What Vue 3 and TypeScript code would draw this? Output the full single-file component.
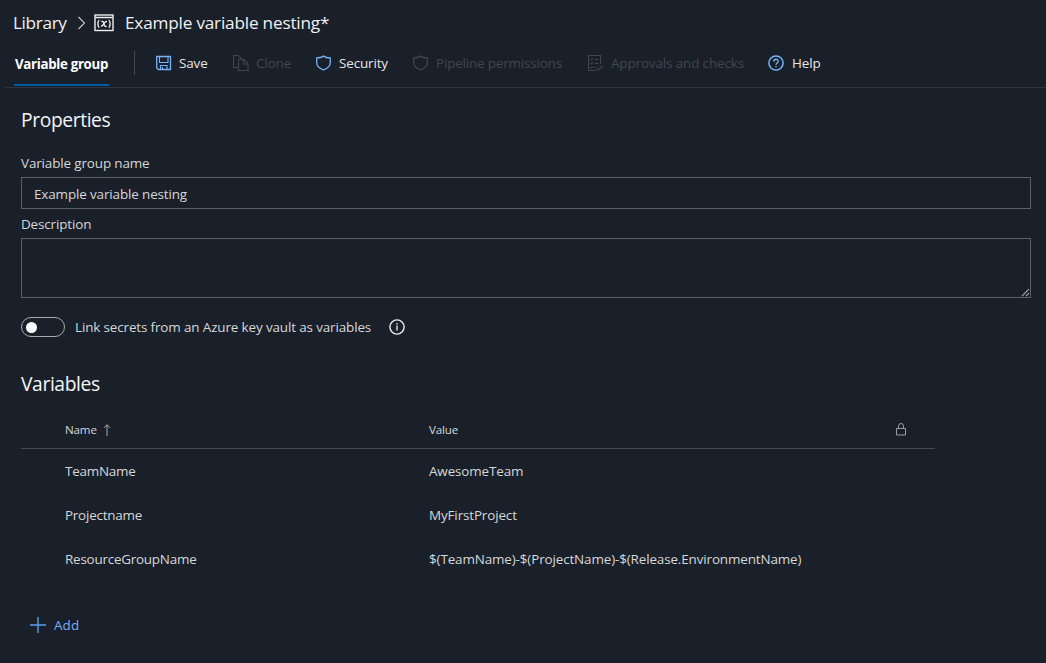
<script setup lang="ts">
import { ref } from 'vue'

interface Action {
  id: string
  label: string
  disabled: boolean
}

interface Variable {
  name: string
  value: string
}

const groupName = ref('Example variable nesting')
const description = ref('')
const linkSecrets = ref(false)

const actions: Action[] = [
  { id: 'save', label: 'Save', disabled: false },
  { id: 'clone', label: 'Clone', disabled: true },
  { id: 'security', label: 'Security', disabled: false },
  { id: 'permissions', label: 'Pipeline permissions', disabled: true },
  { id: 'approvals', label: 'Approvals and checks', disabled: true },
  { id: 'help', label: 'Help', disabled: false },
]

const variables = ref<Variable[]>([
  { name: 'TeamName', value: 'AwesomeTeam' },
  { name: 'Projectname', value: 'MyFirstProject' },
  { name: 'ResourceGroupName', value: '$(TeamName)-$(ProjectName)-$(Release.EnvironmentName)' },
])
</script>

<template>
  <div class="page">
    <header class="crumbs">
      <span class="crumb-root">Library</span>
      <svg class="chevron" width="9" height="14" viewBox="0 0 9 14"><path d="M1.500 1l6 6-6 6" fill="none" stroke="#c4c6c9" stroke-width="1.100" /></svg>
      <svg class="group-icon" width="20" height="18" viewBox="0 0 20 18">
        <rect x="1" y="1" width="18" height="15.500" fill="none" stroke="#eee" stroke-width="1.400" />
        <path d="M1 3.500h18" stroke="#eee" stroke-width="1.500" />
        <path d="M5 6q-2.200 3.700 0 7.800M15 6q2.200 3.700 0 7.800" fill="none" stroke="#eee" stroke-width="1.300" />
        <path d="M7.300 7.500q1.600-.6 2.200 1l1 3q.6 1.500 2.200.7M13 7.500q-1.500-.3-2.700 1.700l-1 1.500q-1 1.700-2.400 1.300" fill="none" stroke="#eee" stroke-width="1.400" />
      </svg>
      <span class="crumb-title">Example variable nesting*</span>
    </header>

    <nav class="toolbar">
      <div class="tab">Variable group</div>
      <div class="divider"></div>
      <div v-for="action in actions" :key="action.id" class="action" :class="[action.id, { disabled: action.disabled }]">
        <svg class="icon" width="16" height="16" viewBox="0 0 16 16" fill="none" stroke="currentColor" stroke-width="1.100">
          <template v-if="action.id === 'save'">
            <path d="M.7 1.500h13.800v13H2.500L.7 13z" stroke-width="1.300" />
            <path d="M3.500 1.500v6h8.500v-6M4.500 14.500v-4h6.500v4M6.500 12v2.500" />
          </template>
          <template v-else-if="action.id === 'clone'">
            <path d="M5.500 12.500h-5v-12h5l3 3v1M5.500 4.500h5.500l4 4v7H5.500zM10.500 4.500v4.500h4.500" />
          </template>
          <path v-else-if="action.id === 'security' || action.id === 'permissions'" d="M7.500 1.100C5.800 2.300 3.100 2.900.7 3v4.500C.7 11 3.800 13.500 7.500 15c3.700-1.500 6.800-4 6.800-7.500V3C11.900 2.900 9.200 2.300 7.500 1.100z" stroke-width="1.300" />
          <template v-else-if="action.id === 'approvals'">
            <path d="M12.500 9V.5H.5v15H8M2.500 4l1 1 1.300-1.700M2.500 8l1 1 1.300-1.700M2.500 12l1 1 1.300-1.700M6.500 4.500h4M6.500 8.500h4M6.500 12.500h1.500M8.700 13l2 2 3.800-4" />
          </template>
          <template v-else>
            <circle cx="8" cy="8" r="7.100" stroke-width="1.500" />
            <path d="M5.800 6.500C5.800 3.500 10.200 3.500 10.200 6.300 10.200 7.900 8 8 8 9.800M8 10.900v1.400" stroke-width="1.400" />
          </template>
        </svg>
        <span class="label">{{ action.label }}</span>
      </div>
    </nav>

    <main class="content">
      <h2 class="properties-title">Properties</h2>
      <label class="field-label name-label" for="group-name">Variable group name</label>
      <input id="group-name" v-model="groupName" class="name-input" type="text" />
      <label class="field-label desc-label" for="group-desc">Description</label>
      <div class="desc-box">
        <textarea id="group-desc" v-model="description" class="desc-input"></textarea>
        <svg class="grip" width="9" height="9" viewBox="0 0 9 9"><path d="M1 8L8 1M5 8l3-3" stroke="#d8dadd" stroke-width="1.100" stroke-dasharray="1 .4" /></svg>
      </div>

      <div class="link-row">
        <button class="toggle" type="button" role="switch" :aria-checked="linkSecrets" @click="linkSecrets = !linkSecrets"><span class="knob"></span></button>
        <span class="link-label">Link secrets from an Azure key vault as variables</span>
        <svg width="16" height="16" viewBox="0 0 16 16"><circle cx="8" cy="8" r="7.100" fill="none" stroke="#eee" stroke-width="1.400" /><path d="M8 6.500v5M8 4v1.400" stroke="#eee" stroke-width="1.300" /></svg>
      </div>

      <h2 class="variables-title">Variables</h2>
      <div class="table">
        <div class="row head">
          <div class="cell sort">
            <span class="col-name">Name</span>
            <svg width="8" height="12" viewBox="0 0 8 12"><path d="M4 12V.8M1 3.800l3-3 3 3" fill="none" stroke="#a9abad" stroke-width="1" /></svg>
          </div>
          <div class="cell"><span class="col-value">Value</span></div>
          <div class="cell lock">
            <svg width="10" height="13" viewBox="0 0 10 13"><path d="M.5 5.500h9v6.500h-9zM2.500 5.500v-2.500a2.500 2.500 0 0 1 5 0v2.500" fill="none" stroke="#9a9da0" stroke-width="1" /></svg>
          </div>
        </div>
        <div v-for="variable in variables" :key="variable.name" class="row">
          <div class="cell name"><span>{{ variable.name }}</span></div>
          <div class="cell"><span>{{ variable.value }}</span></div>
        </div>
      </div>

      <div class="add">
        <svg width="16" height="16" viewBox="0 0 16 16"><path d="M8 0v16M0 8h16" stroke="#5b9df0" stroke-width="1.400" /></svg>
        <span class="add-label">Add</span>
      </div>
    </main>
  </div>
</template>

<style>
body {
  background: #1a2029;
}
</style>

<style scoped>
.page {
  box-sizing: border-box;
  height: 663px;
  overflow: hidden;
  background: #1a2029;
  color: #d6d7d9;
  font-family: "Open Sans", "Noto Sans", sans-serif;
  font-size: 13.45px;
  letter-spacing: -0.13px;
  line-height: 20px;
  white-space: nowrap;
}
.crumbs {
  display: flex;
  align-items: center;
  height: 45px;
  padding-left: 13px;
  color: #f0f0f1;
  font-size: 17.2px;
  letter-spacing: -0.2px;
}
.crumb-root { width: 64px; letter-spacing: -0.35px; }
.chevron { margin-right: 8px; }
.group-icon { margin-right: 11px; }
.toolbar {
  display: flex;
  box-sizing: border-box;
  height: 43px;
  margin-left: 5px;
  padding-left: 9px;
  border-bottom: 1px solid #30353d;
}
.tab {
  box-sizing: border-box;
  width: 95px;
  height: 41px;
  padding: 9px 0 0 1px;
  border-bottom: 2px solid #005ba1;
  color: #fff;
  font-size: 13.3px;
  font-weight: 700;
  letter-spacing: -0.32px;
}
.divider {
  width: 1px;
  height: 24px;
  margin: 6px 21px 0 25px;
  background: #454a52;
}
.action {
  display: flex;
  align-items: center;
  gap: 7px;
  height: 36px;
  color: #e6e6e7;
}
.icon { color: #76b2fa; }
.disabled, .disabled .icon { color: #42464d; }
.save { width: 77px; }
.clone { width: 83px; }
.security { width: 97px; }
.permissions { width: 175px; letter-spacing: -0.17px; }
.approvals { width: 180px; }
.help { gap: 8px; }
.content {
  display: flex;
  flex-direction: column;
  padding: 18px 15px 0 21px;
}
h2 {
  margin: 0;
  color: #f5f5f5;
  font-weight: 400;
  font-size: 19.3px;
  letter-spacing: -0.4px;
  line-height: 28px;
}
.name-label { margin-top: 19px; }
.name-input {
  box-sizing: border-box;
  width: 1010px;
  height: 32px;
  margin: 4px 0 5px;
  padding: 2px 12px 0;
  border: 1px solid #5d6066;
  outline: 0;
  background: transparent;
  color: #d6d7d9;
  font: inherit;
  letter-spacing: inherit;
}
.desc-box {
  position: relative;
  box-sizing: border-box;
  height: 60px;
  margin-top: 4px;
  border: 1px solid #5d6066;
}
.desc-input {
  display: block;
  box-sizing: border-box;
  width: 100%;
  height: 100%;
  border: 0;
  outline: 0;
  resize: none;
  background: transparent;
  color: inherit;
}
.grip {
  position: absolute;
  right: 0;
  bottom: 0;
}
.link-row {
  display: flex;
  align-items: center;
  height: 20px;
  margin-top: 19px;
}
.toggle {
  display: flex;
  align-items: center;
  box-sizing: border-box;
  width: 44px;
  height: 20px;
  margin-right: 10px;
  padding: 0 4px;
  border: 1px solid #a9abad;
  border-radius: 10px;
  background: transparent;
}
.knob {
  width: 11px;
  height: 11px;
  border-radius: 50%;
  background: #fff;
}
.link-label { width: 314px; }
.variables-title { margin-top: 33px; }
.table { width: 914px; margin-top: 13px; }
.row {
  display: grid;
  grid-template-columns: 364px 467px 1fr;
  align-items: center;
  height: 44px;
  padding-left: 44px;
}
.head {
  box-sizing: border-box;
  height: 38px;
  border-bottom: 1px solid #454950;
  font-size: 11.6px;
  letter-spacing: -0.15px;
}
.cell { display: flex; align-items: center; }
.name { letter-spacing: -0.23px; }
.sort { gap: 5px; }
.sort svg { margin-left: 1px; }
.add {
  display: flex;
  align-items: center;
  gap: 8px;
  height: 20px;
  margin-top: 34px;
  padding-left: 9px;
  color: #78aef8;
  letter-spacing: 0.1px;
}
</style>
